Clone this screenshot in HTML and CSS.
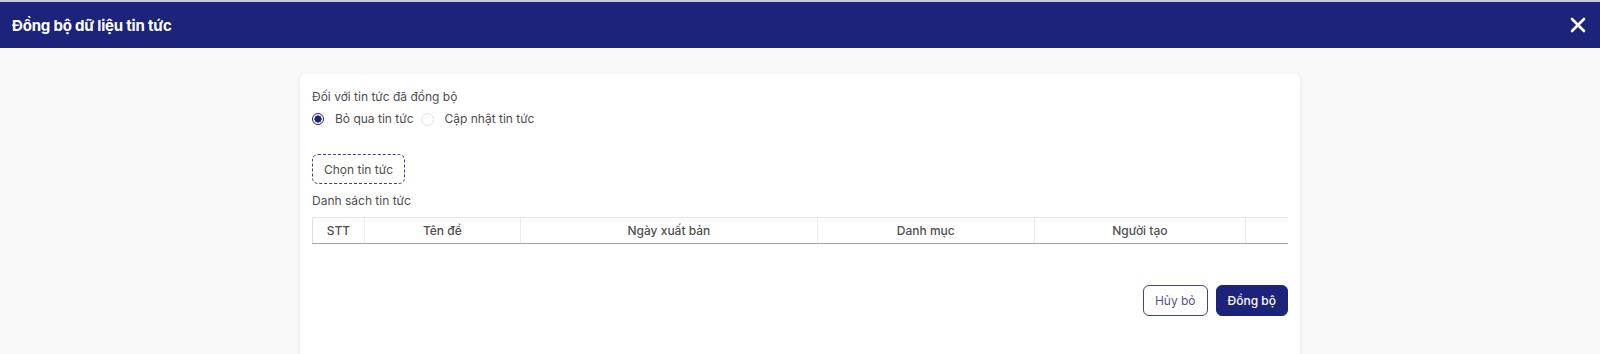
FILE: index.html
```html
<!DOCTYPE html>
<html lang="vi">
<head>
    <meta charset="UTF-8">
    <meta name="viewport" content="width=device-width, initial-scale=1.0">
    <title>Đồng bộ dữ liệu tin tức</title>
    <link rel="stylesheet" href="styles.css">
</head>
<body>
    <div class="modal-header">
        <h1>Đồng bộ dữ liệu tin tức</h1>
        <button class="close-btn" aria-label="Đóng">
            <svg width="16" height="16" viewBox="0 0 16 16">
                <path d="M2 2 L14 14 M14 2 L2 14" stroke="#ffffff" stroke-width="2.6" stroke-linecap="round"/>
            </svg>
        </button>
    </div>

    <div class="modal-body">
        <div class="card">
            <div class="field-label">Đối với tin tức đã đồng bộ</div>
            <div class="radio-group">
                <label class="radio checked"><span class="dot"></span>Bỏ qua tin tức</label>
                <label class="radio"><span class="dot"></span>Cập nhật tin tức</label>
            </div>

            <button class="pick-btn">Chọn tin tức</button>

            <div class="list-label">Danh sách tin tức</div>
            <table class="news-table">
                <thead>
                    <tr>
                        <th class="col-stt">STT</th>
                        <th class="col-title">Tên đề</th>
                        <th class="col-date">Ngày xuất bản</th>
                        <th class="col-cat">Danh mục</th>
                        <th class="col-user">Người tạo</th>
                        <th class="col-act"></th>
                    </tr>
                </thead>
            </table>

            <div class="actions">
                <button class="btn btn-outline">Hủy bỏ</button>
                <button class="btn btn-primary">Đồng bộ</button>
            </div>
        </div>
    </div>
</body>
</html>
```

FILE: styles.css
```css
html, body {
    overflow: hidden;
}
body {
    font-family: 'Inter', 'Noto Sans', sans-serif;
    margin: 0;
    padding: 0;
    height: 352px;
    background-color: #f9f9f9;
    color: #4a4a4a;
    border-top: 2px solid #c9cad9;
}
.modal-header {
    height: 46px;
    background: #1b237b;
    display: flex;
    align-items: center;
    justify-content: space-between;
    padding: 0 12px;
}
.modal-header h1 {
    margin: 0;
    font-size: 15px;
    font-weight: 700;
    color: #ffffff;
    letter-spacing: -0.2px;
}
.close-btn {
    background: none;
    border: none;
    padding: 0;
    margin-right: 2px;
    width: 16px;
    height: 16px;
    cursor: pointer;
    display: flex;
}
.modal-body {
    padding-top: 26px;
    display: flex;
    justify-content: center;
}
.card {
    width: 976px;
    padding: 14px 12px 60px;
    background: #ffffff;
    border-radius: 6px;
    box-shadow: 0 1px 4px rgba(0, 0, 0, 0.08);
    font-size: 12px;
}
.field-label {
    line-height: 18px;
    color: #4d4d4d;
}
.radio-group {
    display: flex;
    gap: 7px;
    margin-top: 4px;
    line-height: 18px;
}
.radio {
    display: flex;
    align-items: center;
    gap: 11px;
    color: #4d4d4d;
}
.radio .dot {
    width: 11px;
    height: 11px;
    border-radius: 50%;
    border: 1px solid #e2e2e2;
    box-sizing: content-box;
}
.radio.checked .dot {
    border: 1.5px solid #1b237b;
    width: 10px;
    height: 10px;
    background: radial-gradient(circle, #1b237b 0 3.4px, #ffffff 3.8px);
}
.pick-btn {
    display: block;
    margin-top: 26px;
    width: 93px;
    height: 30px;
    border: 1px dashed #3a3f8f;
    border-radius: 6px;
    background: #ffffff;
    color: #4d4d4d;
    font-family: inherit;
    font-size: 12px;
    padding: 0;
}
.list-label {
    margin-top: 8px;
    line-height: 18px;
    color: #4d4d4d;
}
.news-table {
    width: 100%;
    margin-top: 7px;
    border-collapse: collapse;
}
.news-table th {
    height: 25px;
    font-weight: 500;
    font-size: 12px;
    color: #505050;
    border-top: 1px solid #e6e6e6;
    border-left: 1px solid #ececec;
    border-bottom: 1.5px solid #a3a3ad;
    padding: 0;
}
.news-table th:first-child {
    border-left: 1px solid #e0e0e0;
}
.col-stt { width: 51px; }
.col-title { width: 156px; }
.col-date { width: 298px; }
.col-cat { width: 217px; }
.col-user { width: 212px; }
.col-act { width: 42px; }
.actions {
    display: flex;
    justify-content: flex-end;
    gap: 8px;
    margin-top: 41px;
}
.btn {
    height: 31px;
    border-radius: 6px;
    font-family: inherit;
    font-size: 12px;
    padding: 0 11px;
    white-space: nowrap;
    cursor: pointer;
}
.btn-outline {
    background: #ffffff;
    border: 1px solid #3d4494;
    color: #5a4f8a;
}
.btn-primary {
    background: #1b237b;
    border: 1px solid #1b237b;
    color: #ffffff;
    font-weight: 500;
}
```
